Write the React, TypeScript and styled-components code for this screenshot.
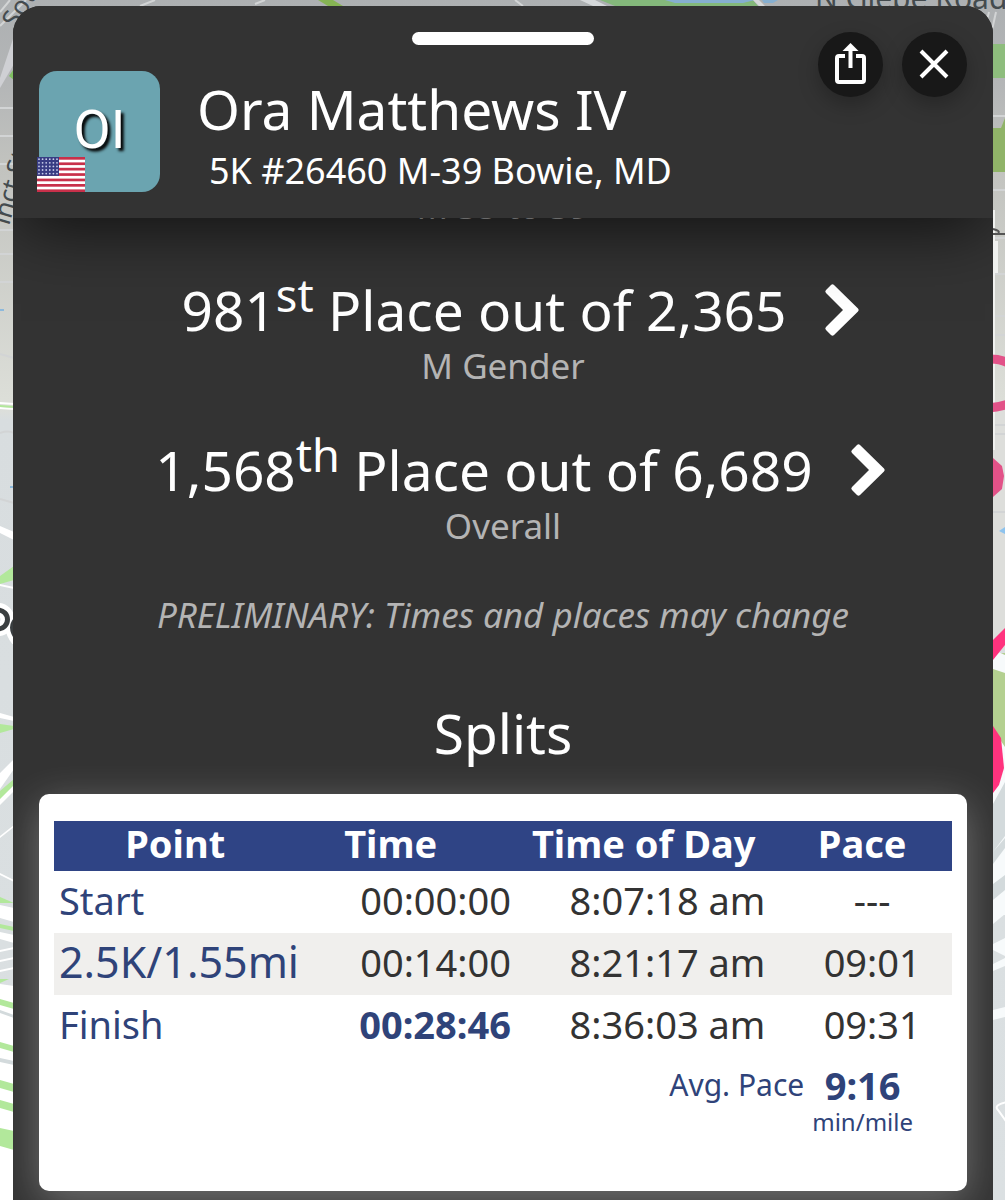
import React from "react";
import styled, { createGlobalStyle } from "styled-components";

const GlobalStyle = createGlobalStyle`
  * { box-sizing: border-box; }
  html, body { margin: 0; }
  body {
    background: #dbe0e2;
    font-family: "Noto Sans", "Open Sans", sans-serif;
    color: #fff;
  }
`;

const Screen = styled.div`
  position: relative;
  height: 100vh;
  overflow: hidden;
  padding: 6px 12px 0 13px;
  display: flex;
  flex-direction: column;
`;

const MapDrawing = styled.svg`
  position: absolute;
  inset: 0;
  width: 100%;
  height: 100%;
`;

const Sheet = styled.main`
  position: relative;
  flex: 1;
  min-height: 0;
  display: flex;
  flex-direction: column;
  overflow: hidden;
  background: #333;
  border-radius: 28px 28px 0 0;
`;

const Header = styled.header`
  position: relative;
  z-index: 1;
  flex: none;
  padding: 26px;
  background: #333;
  box-shadow: 0 16px 64px -8px rgba(0, 0, 0, 0.7);
`;

const Handle = styled.div`
  width: 182px;
  height: 13px;
  margin: 0 auto 26px;
  border-radius: 7px;
  background: #fff;
`;

const Actions = styled.div`
  position: absolute;
  top: 26px;
  right: 26px;
  display: flex;
  gap: 19px;
`;

const RoundButton = styled.button`
  width: 65px;
  height: 65px;
  padding: 0;
  border: 0;
  border-radius: 50%;
  display: grid;
  place-items: center;
  background: #181818;
  color: #fff;
  box-shadow: 0 8px 20px rgba(0, 0, 0, 0.25);
  cursor: pointer;
`;

const Runner = styled.div`
  display: flex;
  gap: 37px;
  height: 121px;
`;

const Avatar = styled.div`
  position: relative;
  flex: none;
  width: 121px;
  height: 121px;
  padding-bottom: 4px;
  border-radius: 18px;
  display: grid;
  place-items: center;
  background: #6ba4b0;
  font-family: Roboto, sans-serif;
  font-size: 54px;
  line-height: 64px;
  text-shadow: 3px 3px 3px #000;
`;

const Flag = styled.svg`
  position: absolute;
  left: -2px;
  bottom: 0;
  width: 48px;
  height: 35px;
`;

const Identity = styled.div`
  min-width: 0;
`;

const Name = styled.h1`
  margin: 0;
  font-size: 55px;
  font-weight: 400;
  line-height: 76px;
`;

const Details = styled.p`
  margin: 0;
  padding-left: 12px;
  font-size: 36px;
  line-height: 48px;
`;

const Results = styled.div`
  flex: 1;
  min-height: 0;
  padding: 0 26px;
  text-align: center;
`;

const Rank = styled.section`
  margin-bottom: 48px;
`;

const ClippedRank = styled(Rank)`
  margin-top: -36px;
`;

const RankLink = styled.a`
  display: flex;
  justify-content: center;
  align-items: center;
  gap: 37px;
  padding-left: 35px;
  color: #fff;
  font-size: 55px;
  line-height: 64px;
  text-decoration: none;

  sup {
    font-size: 45px;
    line-height: 0;
  }
`;

const RankLabel = styled.p`
  margin: 0;
  color: #b4b4b4;
  font-size: 35px;
  line-height: 48px;
`;

const Notice = styled.p`
  margin: 0;
  color: #b4b4b4;
  font-size: 35px;
  font-style: italic;
  line-height: 34px;
`;

const SectionTitle = styled.h2`
  margin: 69px 0 29px;
  font-size: 55px;
  font-weight: 400;
  line-height: 64px;
`;

const Card = styled.section`
  padding: 27px 15px 52px;
  border-radius: 10px;
  background: #fff;
  box-shadow: 0 10px 40px rgba(255, 255, 255, 0.3);
`;

const SplitTable = styled.table`
  width: 100%;
  table-layout: fixed;
  border-collapse: collapse;
  color: #333;
  font-size: 38px;
  line-height: 50px;

  th, td { padding: 0 0 4px; }
`;

const HeadRow = styled.tr`
  background: #2f4485;
  color: #fff;
`;

const HeadCell = styled.th<{ $shift?: number }>`
  && { padding: 0 ${(p) => p.$shift ?? 0}px 0 0; }
  height: 50px;
  line-height: 44px;
  vertical-align: top;
`;

const SplitRow = styled.tr`
  height: 62px;
  &:nth-child(even) { background: #f0efed; }
`;

const PointCell = styled.th<{ $large?: boolean }>`
  && { padding-left: 5px; }
  color: #2f4379;
  font-size: ${(p) => (p.$large ? 43 : 38)}px;
  font-weight: 400;
  text-align: left;
  white-space: nowrap;
`;

const TimeCell = styled.td<{ $final?: boolean }>`
  && { padding-right: 10px; }
  text-align: right;
  white-space: nowrap;
  ${(p) => p.$final && "color: #2f4379; font-weight: 700;"}
`;

const DayCell = styled(TimeCell)`
  && { padding-right: 7px; }
`;

const PaceCell = styled.td`
  && { padding-left: 20px; }
  text-align: center;
`;

const Average = styled.div`
  display: flex;
  justify-content: flex-end;
  gap: 8px;
  padding: 4px 39px 0 0;
  color: #2f4379;
  font-size: 30px;
  line-height: 48px;
`;

const AverageValue = styled.div`
  text-align: center;

  strong {
    display: block;
    font-size: 38px;
  }

  small {
    display: block;
    font-size: 24px;
    line-height: 26px;
  }
`;

const ranks = [
  { place: "981", suffix: "st", total: "2,365", label: "M Gender" },
  { place: "1,568", suffix: "th", total: "6,689", label: "Overall" },
];

const splits = [
  { point: "Start", time: "00:00:00", day: "8:07:18 am", pace: "---" },
  { point: "2.5K/1.55mi", time: "00:14:00", day: "8:21:17 am", pace: "09:01", large: true },
  { point: "Finish", time: "00:28:46", day: "8:36:03 am", pace: "09:31", final: true },
];

function CourseMap() {
  return (
    <MapDrawing viewBox="0 0 1005 1200" preserveAspectRatio="none" aria-hidden="true">
      <defs>
        <linearGradient id="haze" x1="0" y1="0" x2="0" y2="1">
          <stop offset="0" stopColor="#adb0b2" />
          <stop offset="0.07" stopColor="#b4b6b7" />
          <stop offset="0.14" stopColor="#c2c3bf" />
          <stop offset="0.34" stopColor="#dddfd9" />
          <stop offset="0.35" stopColor="#d8dddf" />
          <stop offset="1" stopColor="#dbe0e2" />
        </linearGradient>
      </defs>
      <rect width="1005" height="1200" fill="url(#haze)" />
      <rect x="980" y="410" width="25" height="240" fill="#dddedb" />

      <g fill="none" stroke="#d2d4d5" strokeWidth="2">
        <path d="M0 26 26 0M0 12 10 0M0 108h14M0 136h14M0 164h14M0 230h14M0 254h14M0 282h14M0 354l14 4M0 433q8-3 14 0M0 499l14 4" />
        <path d="M140 6 155 0M255 4l10-4M515 0l8 6M985 28l4-16M992 30l4-18M993 116h12M993 190h12M993 238h12M993 274h12M993 316h12M993 335h12M993 425h12M993 434h12M993 512h12" />
      </g>
      <path d="M0 78 14 36v28L0 88z" fill="#cfd0d4" />
      <path d="M9 76l6-9v14z" fill="#7fbf62" />
      <path d="M318 0h15l10 6h-15z" fill="#86b454" />
      <path d="M600 0h153l5 6H615z" fill="#84b87b" />
      <path d="M665 0h90l-12 3h-68z" fill="#86afd0" />
      <path d="M580 0h15l12 6h-14zM753 0h6l6 6h-6z" fill="#d5d8da" />
      <path d="M762 0h16l-5 3h-9z" fill="#86afd0" />
      <path d="M990 44h15v34h-15z" fill="#8ebd7d" />
      <path d="M1005 118v10h-4z" fill="#90b468" />
      <path d="M990 128h15v44h-15z" fill="#90b468" />

      <g fill="#444b4e" fontFamily="Noto Sans" fontSize="26">
        <text transform="translate(16 30) rotate(-58)">South</text>
        <text transform="translate(9 226) rotate(-74)">inct St</text>
        <text x="815" y="9" fontSize="30">N Glebe Road</text>
      </g>

      <g fill="#fff">
        <path d="M0 402l14 1v2l-14-1zM0 407l14 1v2l-14-1zM0 526l14 6v8l-14-7zM0 584l14 3v2l-14-3z" />
        <path d="M0 713l14 4v4l-14-3zM0 773l14-14v10L0 789zM0 797l14-14v8L0 805zM0 836l14-11v2L0 838zM0 873l14 7v2l-14-7z" />
        <path d="M0 905l14 3v14l-14-4zM0 932l14 3v8l-14-4zM0 950l14-3v2l-14 3zM0 960l14-3v2l-14 3zM0 970l14-3v2l-14 3z" />
        <path d="M0 984l14 2v94l-14-4zM0 1020h14v180H0z" />
      </g>
      <g fill="#b2e89b">
        <path d="M0 405l14 1v2l-14-1zM0 576l14-10v14L0 584zM0 724l14 2v3L0 733zM0 791l14-12v6L0 799z" />
        <path d="M0 897l14 6H0zM0 924l14 3v4l-14-3zM0 979h9l-9 4zM0 999l14 4v6l-14-4zM0 1042l14 4v6l-14-4z" />
        <path d="M0 1080l14 4v8l-14-4zM0 1100l14 4v8l-14-4zM0 1128l14 3v19l-14-4z" />
      </g>
      <path d="M0 1010l14 5v3l-14-5zM0 1058l14 3v4l-14-3z" fill="#d3dadc" />
      <path d="M0 310h4M10 487h4" stroke="#8db9dc" strokeWidth="2" />
      <path d="M-2 610a9 9 0 0 1 0 19M18 618q-11 8 0 22" fill="none" stroke="#fff" strokeWidth="14" />
      <path d="M-2 610a9 9 0 0 1 0 19M18 618q-11 8 0 22" fill="none" stroke="#3a3e40" strokeWidth="5" />

      <path d="M993 210h2v240h-2zM995 241h3v32h-3z" fill="#f0f1ef" />
      <path d="M993 229q8 2 5 4M993 234h12" fill="none" stroke="#555" strokeWidth="2" />
      <path d="M993 650l12 5v260h-12z" fill="#f7fafb" />
      <path d="M993 669l12 4v74l-12-18z" fill="#b4d090" />
      <path d="M1001 653h4v2z" fill="#b4d090" />
      <path d="M1005 782v54l-12 16v-48zM993 852l12-14v10l-12 16zM993 884l12-9v16l-12 10z" fill="#d3dadc" />
      <path d="M993 900l12-10v24l-12 10z" fill="#f7fafb" />
      <path d="M993 944l12-6v18l-12-6zM993 964l12-6v8l-12 5zM993 1010l12-3v10l-12 3z" fill="#f7fafb" />
      <path d="M1007 1102q-14 3-9 8l10 14" fill="none" stroke="#fff" strokeWidth="2" />
      <path d="M988 359q17-1 28 10M988 408q17-1 28-8" fill="none" stroke="#e25288" strokeWidth="9" />
      <path d="M993 458l9 8 2 10-2 13-9 8z" fill="#e25288" />
      <path d="M999 531l6-4v7z" fill="#8dc3ee" />
      <path d="M993 640l12-12v17l-12 15z" fill="#ff337e" />
      <path d="M993 726l8 12 3 30-5 17-6 8z" fill="#ff337e" />
    </MapDrawing>
  );
}

function UsFlag() {
  const stars = Array.from({ length: 30 }, (_, i) => i);
  return (
    <Flag viewBox="0 0 48 35" role="img" aria-label="United States">
      <rect width="48" height="35" fill="#fff" />
      {[0, 1, 2, 3, 4, 5, 6].map((n) => (
        <rect key={n} y={n * 5.4} width="48" height="2.7" fill="#c8304a" />
      ))}
      <rect width="22" height="18.9" fill="#373c83" />
      {stars.map((n) => (
        <circle key={n} cx={2 + (n % 6) * 3.6} cy={2.2 + Math.floor(n / 6) * 3.6} r="0.9" fill="#c6cbe8" />
      ))}
    </Flag>
  );
}

function ShareIcon() {
  return (
    <svg width="31" height="44" viewBox="0 0 31 44" fill="none" aria-hidden="true">
      <path d="M10 13H4q-2 0-2 2v22q0 2 2 2h23q2 0 2-2V15q0-2-2-2h-6" stroke="currentColor" strokeWidth="4" />
      <path d="M15.500 25V6" stroke="currentColor" strokeWidth="4" />
      <path d="M15.500 0l8 8h-16z" fill="currentColor" />
    </svg>
  );
}

function CloseIcon() {
  return (
    <svg width="31" height="31" viewBox="0 0 31 31" fill="none" aria-hidden="true">
      <path d="M2 2l26 26M28 2L2 28" stroke="currentColor" strokeWidth="4" />
    </svg>
  );
}

function Chevron() {
  return (
    <svg width="36" height="54" viewBox="0 0 36 54" aria-hidden="true">
      <path
        d="M2 7l5-5q1.500-1.500 3 0l24 23.500q1.500 1.500 0 3L10 52q-1.500 1.500-3 0l-5-5q-1.500-1.500 0-3l17-17L2 10q-1.500-1.500 0-3z"
        fill="currentColor"
      />
    </svg>
  );
}

export default function App() {
  return (
    <>
      <GlobalStyle />
      <Screen>
        <CourseMap />
        <Sheet>
          <Header>
            <Handle />
            <Actions>
              <RoundButton type="button" aria-label="Share"><ShareIcon /></RoundButton>
              <RoundButton type="button" aria-label="Close"><CloseIcon /></RoundButton>
            </Actions>
            <Runner>
              <Avatar>
                OI
                <UsFlag />
              </Avatar>
              <Identity>
                <Name>Ora Matthews IV</Name>
                <Details>5K #26460 M-39 Bowie, MD</Details>
              </Identity>
            </Runner>
          </Header>
          <Results>
            <ClippedRank>
              <RankLabel>M 35 to 39</RankLabel>
            </ClippedRank>
            {ranks.map((r) => (
              <Rank key={r.label}>
                <RankLink href="#leaderboard">
                  <span>{r.place}<sup>{r.suffix}</sup> Place out of {r.total}</span>
                  <Chevron />
                </RankLink>
                <RankLabel>{r.label}</RankLabel>
              </Rank>
            ))}
            <Notice>PRELIMINARY: Times and places may change</Notice>
            <SectionTitle>Splits</SectionTitle>
            <Card>
              <SplitTable>
                <colgroup>
                  <col style={{ width: "27%" }} />
                  <col style={{ width: "25%" }} />
                  <col style={{ width: "28%" }} />
                  <col style={{ width: "20%" }} />
                </colgroup>
                <thead>
                  <HeadRow>
                    <HeadCell scope="col">Point</HeadCell>
                    <HeadCell scope="col" $shift={36}>Time</HeadCell>
                    <HeadCell scope="col" $shift={6}>Time of Day</HeadCell>
                    <HeadCell scope="col">Pace</HeadCell>
                  </HeadRow>
                </thead>
                <tbody>
                  {splits.map((s) => (
                    <SplitRow key={s.point}>
                      <PointCell scope="row" $large={s.large}>{s.point}</PointCell>
                      <TimeCell $final={s.final}>{s.time}</TimeCell>
                      <DayCell>{s.day}</DayCell>
                      <PaceCell>{s.pace}</PaceCell>
                    </SplitRow>
                  ))}
                </tbody>
                <tfoot>
                  <tr>
                    <td colSpan={4}>
                      <Average>
                        <span>Avg. Pace</span>
                        <AverageValue>
                          <strong>9:16</strong>
                          <small>min/mile</small>
                        </AverageValue>
                      </Average>
                    </td>
                  </tr>
                </tfoot>
              </SplitTable>
            </Card>
          </Results>
        </Sheet>
      </Screen>
    </>
  );
}
